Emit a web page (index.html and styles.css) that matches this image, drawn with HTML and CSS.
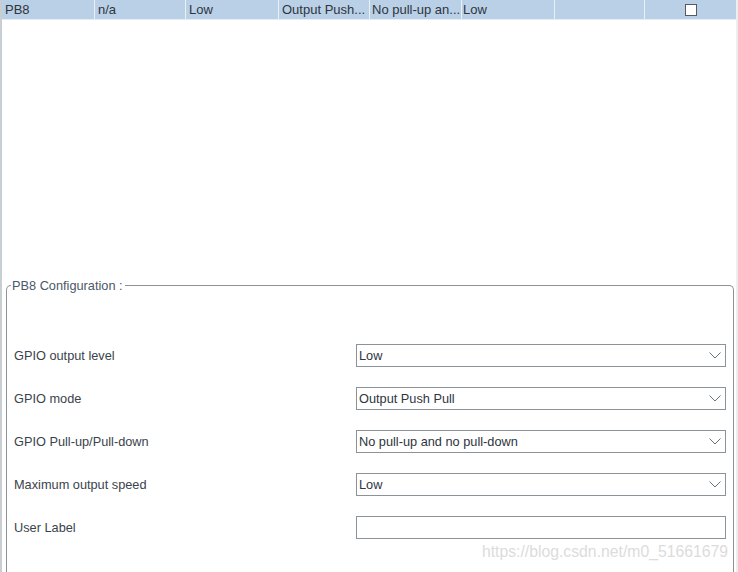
FILE: index.html
```html
<!DOCTYPE html>
<html>
<head>
<meta charset="utf-8">
<link rel="stylesheet" href="styles.css">
</head>
<body>
<div class="page">
  <div class="table">
    <div class="row">
      <div class="cell c1">PB8</div>
      <div class="cell c2">n/a</div>
      <div class="cell c3">Low</div>
      <div class="cell c4">Output Push...</div>
      <div class="cell c5">No pull-up an...</div>
      <div class="cell c6">Low</div>
      <div class="cell c7"></div>
      <div class="cell c8"><span class="check"></span></div>
    </div>
  </div>
  <fieldset class="config">
    <legend class="legend">PB8 Configuration :</legend>
    <div class="form">
      <div class="frow"><span class="label">GPIO output level</span><div class="select"><span>Low</span><svg class="chev" width="12" height="7" viewBox="0 0 12 7"><path d="M0.5 0.5 L6 6 L11.5 0.5" fill="none" stroke="#6b7178" stroke-width="1"/></svg></div></div>
      <div class="frow"><span class="label">GPIO mode</span><div class="select"><span>Output Push Pull</span><svg class="chev" width="12" height="7" viewBox="0 0 12 7"><path d="M0.5 0.5 L6 6 L11.5 0.5" fill="none" stroke="#6b7178" stroke-width="1"/></svg></div></div>
      <div class="frow"><span class="label">GPIO Pull-up/Pull-down</span><div class="select"><span>No pull-up and no pull-down</span><svg class="chev" width="12" height="7" viewBox="0 0 12 7"><path d="M0.5 0.5 L6 6 L11.5 0.5" fill="none" stroke="#6b7178" stroke-width="1"/></svg></div></div>
      <div class="frow"><span class="label">Maximum output speed</span><div class="select"><span>Low</span><svg class="chev" width="12" height="7" viewBox="0 0 12 7"><path d="M0.5 0.5 L6 6 L11.5 0.5" fill="none" stroke="#6b7178" stroke-width="1"/></svg></div></div>
      <div class="frow"><span class="label">User Label</span><div class="select input"></div></div>
    </div>
  </fieldset>
  <div class="watermark">https://blog.csdn.net/m0_51661679</div>
</div>
</body>
</html>
```
FILE: styles.css
```css
html, body {
  margin: 0;
  padding: 0;
  background: #ffffff;
}
body {
  width: 738px;
  height: 572px;
  overflow: hidden;
  font-family: "Liberation Sans", Arial, sans-serif;
  font-size: 12.75px;
  color: #333b44;
}
.page {
  position: relative;
  height: 572px;
  border-left: 2px solid #c9ced3;
  border-right: 2px solid #eceef0;
  box-sizing: border-box;
  width: 738px;
  overflow: hidden;
}
.table {
  height: 278px;
}
.row {
  display: flex;
  height: 19px;
  background: #b9d0e6;
  border-bottom: 1px solid #e4edf6;
}
.cell {
  box-sizing: border-box;
  height: 19px;
  line-height: 19px;
  padding-left: 3px;
  border-right: 1px solid #e8f0f8;
  white-space: nowrap;
  overflow: hidden;
  color: #2e3540;
  font-size: 13px;
}
.c1 { width: 93px; }
.c2 { width: 91px; }
.c3 { width: 93px; }
.c4 { width: 91px; }
.c5 { width: 92px; padding-left: 2px; }
.c6 { width: 93px; padding-left: 1px; }
.c7 { width: 90px; }
.c8 { width: 91px; border-right: none; display: flex; align-items: center; justify-content: center; padding-left: 0; }
.check {
  display: block;
  width: 10px;
  height: 10px;
  border: 1px solid #555a60;
  background: #ffffff;
}
.config {
  margin: 0 0 0 4px;
  width: 728px;
  height: 300px;
  box-sizing: border-box;
  border: 1px solid #8b9298;
  border-bottom: none;
  border-radius: 5px 5px 0 0;
  padding: 0;
}
.legend {
  padding: 0 2px 0 1px;
  margin-left: 4px;
  font-size: 12.75px;
  color: #4b5868;
}
.form {
  padding-top: 51px;
  display: flex;
  flex-direction: column;
  gap: 20px;
}
.frow {
  display: flex;
  align-items: center;
  height: 23px;
}
.label {
  width: 342px;
  padding-left: 7px;
  color: #3a434d;
}
.select {
  box-sizing: border-box;
  width: 370px;
  height: 23px;
  border: 1px solid #8b9298;
  display: flex;
  align-items: center;
  justify-content: space-between;
  padding: 0 4px 0 2px;
  color: #2e3540;
}
.chev {
  display: block;
}
.watermark {
  position: absolute;
  right: 8px;
  top: 543px;
  font-size: 15.75px;
  color: #dcdcdc;
}
```
